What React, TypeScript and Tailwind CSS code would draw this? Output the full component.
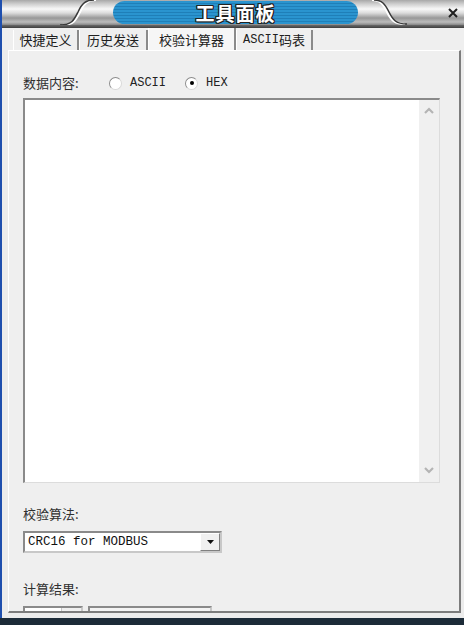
const cjk = "font-['Noto_Sans_CJK_SC','Noto_Sans',sans-serif]"
const mono = "font-['Liberation_Mono','Courier_New',monospace]"

const tabs = [
  { label: '快捷定义', w: 'w-[66px]' },
  { label: '历史发送', w: 'w-[69px]' },
  { label: '校验计算器', w: 'w-[88px]', active: true },
  { label: 'ASCII码表', w: 'w-[77px]' },
]

function Radio({ checked, label }: { checked?: boolean; label: string }) {
  return (
    <span className="flex items-center gap-[8px]">
      <span className="flex h-[13px] w-[13px] items-center justify-center rounded-full border border-[#8c8c8c] border-b-[#d8d8d8] border-r-[#d8d8d8] bg-white">
        {checked && <span className="h-[4px] w-[4px] rounded-full bg-black" />}
      </span>
      <span className={`${mono} text-[12px] text-[#222]`}>{label}</span>
    </span>
  )
}

function Chevron({ up }: { up?: boolean }) {
  return (
    <svg width="10" height="7" viewBox="0 0 10 7">
      <path
        d={up ? 'M1 6 L5 2 L9 6' : 'M1 1 L5 5 L9 1'}
        fill="none"
        stroke="#b4b4b4"
        strokeWidth="2.2"
      />
    </svg>
  )
}

export default function App() {
  return (
    <div className="flex h-[625px] w-[464px] overflow-hidden bg-[#ececec]">
      {/* window frame, left edge */}
      <div className="flex w-[2px] shrink-0 flex-col">
        <div className="flex-1 bg-[#1f4fae]" />
        <div className="h-[7px] bg-[#1c2b38]" />
      </div>

      <div className="flex flex-1 flex-col">
        {/* title bar */}
        <div className="relative flex h-[25px] shrink-0 items-center bg-[linear-gradient(180deg,#a8a8a8_0%,#cfcfcf_16%,#f8f8f8_36%,#dcdcdc_52%,#989898_72%,#bcbcbc_88%,#858585_100%)]">
          <svg className="absolute inset-0" width="462" height="25" viewBox="0 0 462 25">
            <path d="M58 25 C70 25 72 20 76 12 C80 3 84 0 92 0" fill="none" stroke="#ffffff" strokeWidth="2" transform="translate(2,0)" />
            <path d="M58 25 C70 25 72 20 76 12 C80 3 84 0 92 0" fill="none" stroke="#3a3a3a" strokeWidth="1.5" />
            <path d="M372 0 C380 0 383 4 387 12 C391 20 394 24 405 24" fill="none" stroke="#ffffff" strokeWidth="2" transform="translate(-2,0)" />
            <path d="M372 0 C380 0 383 4 387 12 C391 20 394 24 405 24" fill="none" stroke="#3a3a3a" strokeWidth="1.5" />
          </svg>
          <div className="relative ml-[111px] flex h-[23px] w-[245px] items-center justify-center rounded-full bg-[repeating-linear-gradient(180deg,#2a94cf_0px,#2a94cf_2px,#1f7fb8_2px,#1f7fb8_3px)]">
            <span
              className={`${cjk} text-[19px] font-bold leading-none tracking-[1px] text-white [text-shadow:1px_0_0_#222,-1px_0_0_#222,0_1px_0_#222,0_-1px_0_#222,1px_1px_0_#222,-1px_-1px_0_#222,1px_-1px_0_#222,-1px_1px_0_#222]`}
            >
              工具面板
            </span>
          </div>
          <svg className="relative ml-auto mr-[6px]" width="10" height="10" viewBox="0 0 10 10">
            <path d="M1 1 L9 9 M9 1 L1 9" stroke="#202020" strokeWidth="2" />
          </svg>
        </div>
        <div className="h-[3px] shrink-0 bg-[linear-gradient(180deg,#6a6a6a,#3e3e3e)]" />

        {/* tabs */}
        <div className="flex h-[22px] shrink-0 items-end bg-[#efefef] pl-[11px]">
          {tabs.map((t) =>
            t.active ? (
              <div
                key={t.label}
                className={`${t.w} ${cjk} flex h-[22px] items-start justify-center border-l border-r-2 border-l-white border-r-[#8a8a8a] bg-[#f6f6f6] pt-[2px] text-[13px] text-[#202020]`}
              >
                {t.label}
              </div>
            ) : (
              <div
                key={t.label}
                className={`${t.w} ${cjk} flex h-[20px] items-center justify-center border-l border-r-2 border-l-white border-r-[#8a8a8a] text-[13px] text-[#202020]`}
              >
                {t.label === 'ASCII码表' ? (
                  <>
                    <span className={`${mono} text-[12px]`}>ASCII</span>码表
                  </>
                ) : (
                  t.label
                )}
              </div>
            ),
          )}
        </div>

        {/* panel */}
        <div className="mr-[3px] ml-[6px] flex h-[563px] shrink-0 flex-col overflow-hidden border-t border-l border-r-2 border-b-2 border-t-white border-l-white border-r-[#7c7c7c] border-b-[#7c7c7c] bg-[#efefef] pl-[14px] pt-[24px]">
          <div className="flex h-[16px] shrink-0 items-center">
            <span className={`${cjk} w-[80px] text-[13px] text-[#303030]`}>数据内容:</span>
            <span className="ml-[6px]">
              <Radio label="ASCII" />
            </span>
            <span className="ml-[19px]">
              <Radio checked label="HEX" />
            </span>
          </div>

          <div className="mt-[7px] flex h-[385px] w-[417px] shrink-0 border-t-2 border-l-2 border-r border-b border-t-[#8a8a8a] border-l-[#8a8a8a] border-r-[#dcdcdc] border-b-[#dcdcdc]">
            <div className="flex-1 bg-white" />
            <div className="flex w-[20px] flex-col items-center justify-between bg-[#f0f0f0] pt-[7px] pb-[8px]">
              <Chevron up />
              <Chevron />
            </div>
          </div>

          <div className={`${cjk} mt-[23px] h-[16px] shrink-0 text-[13px] leading-[16px] text-[#303030]`}>校验算法:</div>

          <div className="mt-[9px] flex h-[22px] w-[199px] shrink-0 border-2 border-[#8a8a8a] border-r-[#c8c8c8] border-b-[#c8c8c8] bg-white">
            <span className={`${mono} flex-1 pl-[3px] text-[12.5px] leading-[18px] text-[#111]`}>CRC16 for MODBUS</span>
            <span className="flex w-[20px] items-center justify-center border border-white border-r-[#808080] border-b-[#808080] bg-[#f0f0f0]">
              <svg width="7" height="4" viewBox="0 0 7 4">
                <path d="M0 0 H7 L3.5 4 Z" fill="#111" />
              </svg>
            </span>
          </div>

          <div className={`${cjk} mt-[28px] h-[16px] shrink-0 text-[13px] leading-[16px] text-[#303030]`}>计算结果:</div>

          <div className="mt-[9px] flex shrink-0 gap-[5px]">
            <div className="flex h-[20px] w-[60px] border-t-2 border-l-2 border-r-2 border-[#8a8a8a] border-r-[#c8c8c8] bg-white">
              <div className="ml-auto w-[20px] border-l border-[#c8c8c8] bg-[#f0f0f0]" />
            </div>
            <div className="h-[20px] w-[124px] border-t-2 border-l-2 border-r-2 border-[#8a8a8a] border-r-[#c8c8c8] bg-[#f4f4f4]" />
          </div>
        </div>

        <div className="h-[5px] shrink-0 bg-[#ececec]" />
        <div className="h-[7px] shrink-0 bg-[#1c2b38]" />
      </div>
    </div>
  )
}
